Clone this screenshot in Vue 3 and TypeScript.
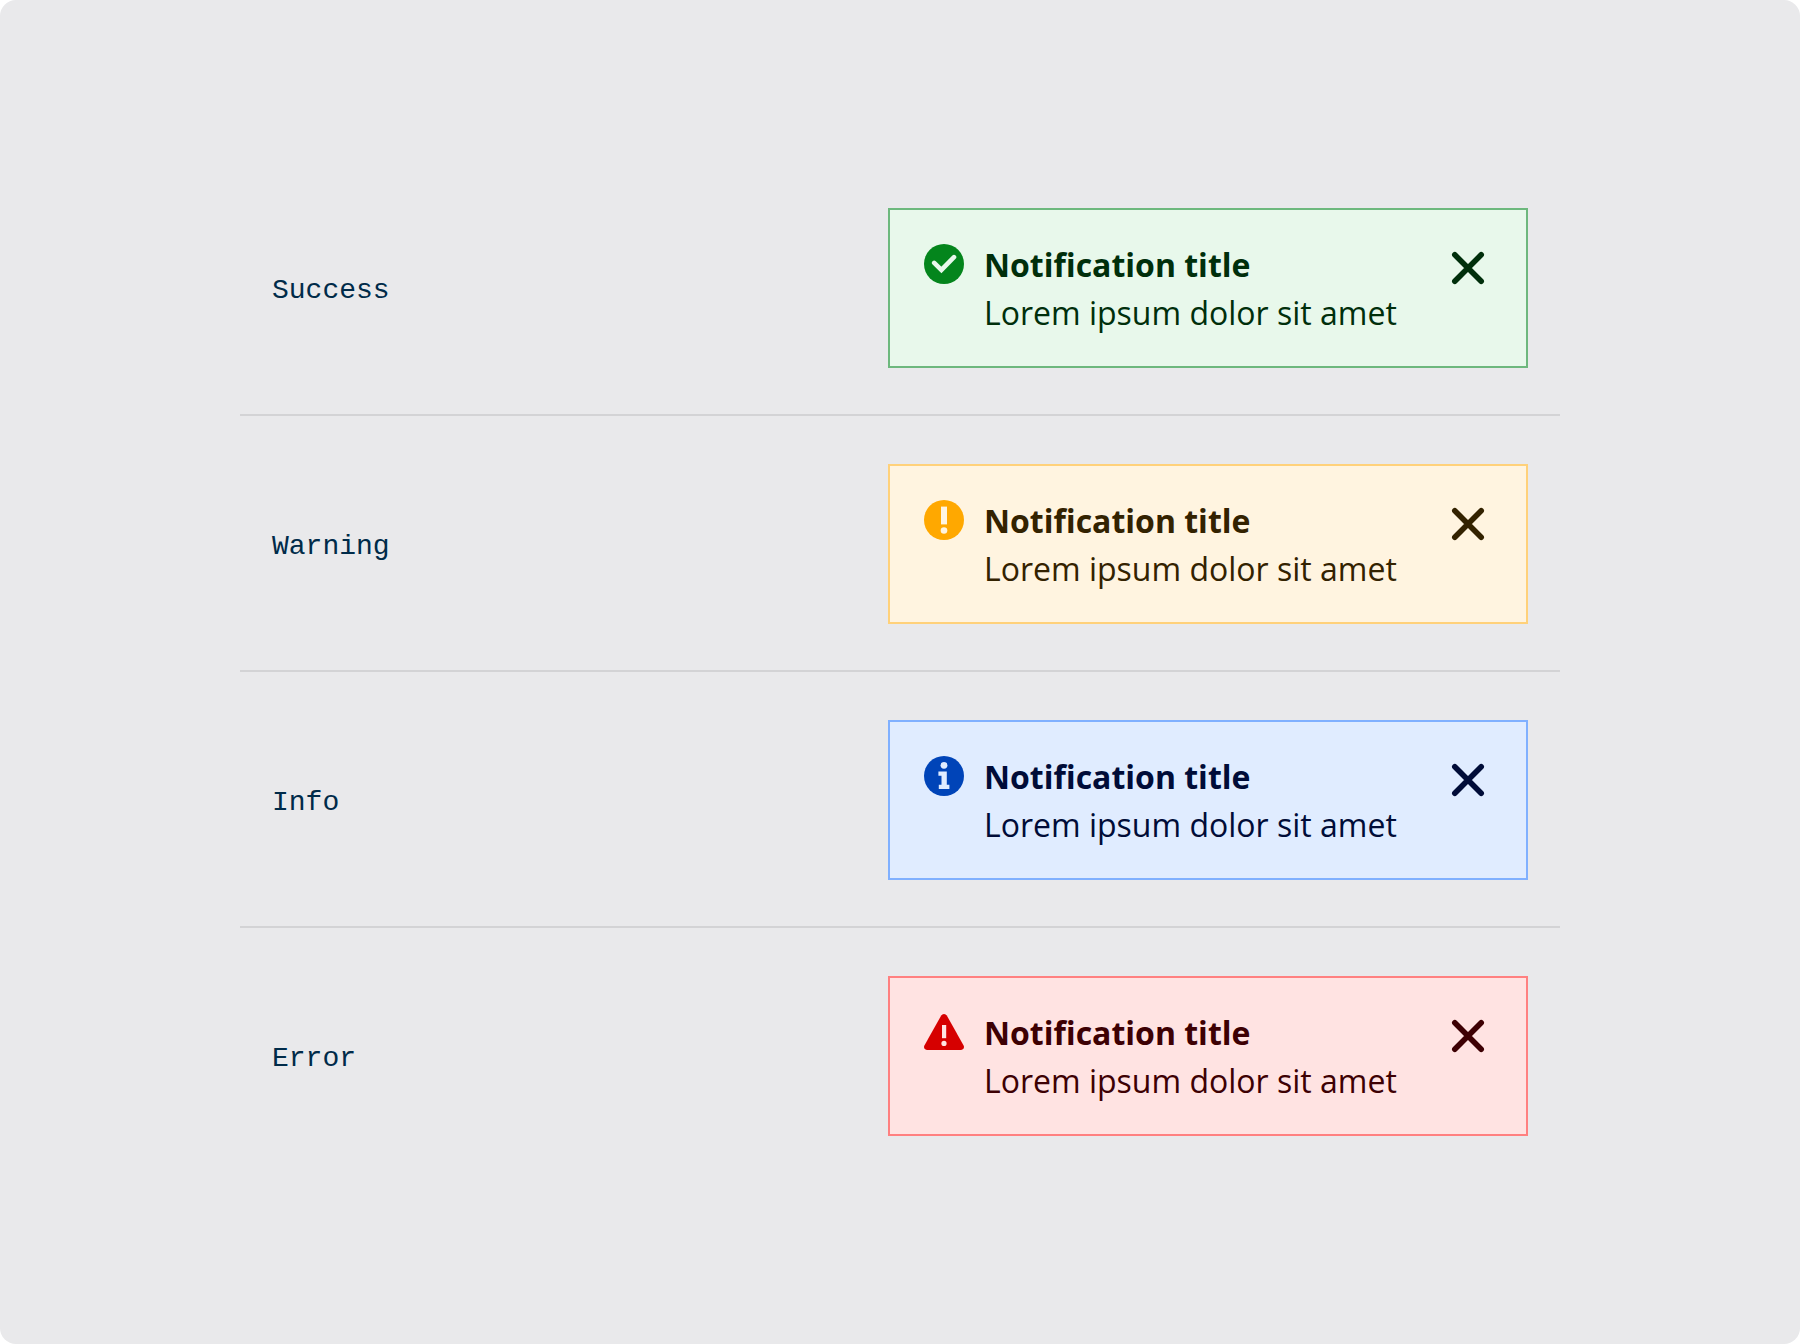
<script setup lang="ts">
import { ref } from 'vue'

type Kind = 'success' | 'warning' | 'info' | 'error'

interface Row {
  kind: Kind
  label: string
  title: string
  text: string
  open: boolean
}

const make = (kind: Kind, label: string): Row => ({
  kind,
  label,
  title: 'Notification title',
  text: 'Lorem ipsum dolor sit amet',
  open: true,
})

const rows = ref<Row[]>([
  make('success', 'Success'),
  make('warning', 'Warning'),
  make('info', 'Info'),
  make('error', 'Error'),
])
</script>

<template>
  <main class="page">
    <ul class="list">
      <li v-for="row in rows" :key="row.kind" class="row">
        <span class="label">{{ row.label }}</span>
        <section v-if="row.open" class="notice" :class="row.kind" role="status">
          <svg class="icon" viewBox="0 0 40 40" aria-hidden="true">
            <template v-if="row.kind === 'success'">
              <circle cx="20" cy="20" r="20" fill="currentColor" />
              <path class="mark-line" d="M10.2 18.9 17.4 25.9 30 13.2" />
            </template>
            <template v-else-if="row.kind === 'warning'">
              <circle cx="20" cy="20" r="20" fill="currentColor" />
              <path class="mark" d="M17 6.6h6v17.8h-6z" />
              <circle class="mark" cx="20" cy="30.5" r="3.3" />
            </template>
            <template v-else-if="row.kind === 'info'">
              <circle cx="20" cy="20" r="20" fill="currentColor" />
              <circle class="mark" cx="20" cy="9.3" r="3.4" />
              <path class="mark" d="M14.4 15.6h8.4v13.2h2.6v4.2H14.8v-4.2h2.7v-9h-3.1z" />
            </template>
            <template v-else>
              <path
                d="M17.2 3.5a3.3 3.3 0 0 1 5.6 0L39.6 33.6a3 3 0 0 1-2.6 4.4H3a3 3 0 0 1-2.6-4.4z"
                fill="currentColor"
              />
              <path class="mark" d="M18 13h4.2v13.2H18z" />
              <circle class="mark" cx="20" cy="31.4" r="2.6" />
            </template>
          </svg>
          <div class="body">
            <h2 class="title">{{ row.title }}</h2>
            <p class="text">{{ row.text }}</p>
          </div>
          <button class="close" type="button" aria-label="Close" @click="row.open = false">
            <svg class="cross" viewBox="0 0 48 48" aria-hidden="true">
              <path d="M10.8 10.8 37.2 37.2M37.2 10.8 10.8 37.2" />
            </svg>
          </button>
        </section>
      </li>
    </ul>
  </main>
</template>

<style>
body {
  margin: 0;
  background: #ffffff;
}
</style>

<style scoped>
.page {
  box-sizing: border-box;
  min-height: 100vh;
  padding: 160px 32px;
  border-radius: 16px;
  background: #e9e9eb;
}

.list {
  max-width: 1320px;
  margin: 0 auto;
  padding: 0;
  list-style: none;
}

.row {
  box-sizing: border-box;
  display: grid;
  grid-template-columns: minmax(0, 1fr) minmax(0, 640px);
  align-items: center;
  min-height: 256px;
  padding: 48px 32px 46px;
  border-bottom: 2px solid #d3d3d5;
}

.row:last-child {
  border-bottom-color: transparent;
}

.label {
  padding-top: 6px;
  color: #002b49;
  font: 28px/40px 'Liberation Mono', 'Courier New', monospace;
}

.notice {
  box-sizing: border-box;
  display: flex;
  align-items: flex-start;
  gap: 20px;
  min-height: 160px;
  padding: 31px 34px 29px;
  border: 2px solid var(--line);
  background: var(--fill);
  color: var(--text);
  font-family: 'Open Sans', 'Noto Sans', sans-serif;
}

.success {
  --fill: #e8f8eb;
  --line: #6db87d;
  --accent: #04851c;
  --text: #002f0b;
}

.warning {
  --fill: #fff4e0;
  --line: #ffd17a;
  --accent: #ffa800;
  --text: #332200;
}

.info {
  --fill: #e0ecff;
  --line: #80b0ff;
  --accent: #0044b8;
  --text: #000c38;
}

.error {
  --fill: #ffe3e2;
  --line: #ff8080;
  --accent: #d60000;
  --text: #3d0003;
}

.icon {
  flex: none;
  width: 40px;
  height: 40px;
  margin-top: 3px;
  color: var(--accent);
}

.mark {
  fill: var(--fill);
}

.mark-line {
  fill: none;
  stroke: var(--fill);
  stroke-width: 4.6;
  stroke-linecap: round;
}

.body {
  flex: 1;
  min-width: 0;
}

.title,
.text {
  margin: 0;
  font-size: 32px;
  line-height: 48px;
}

.title {
  font-weight: 700;
}

.text {
  font-weight: 400;
}

.close {
  flex: none;
  width: 48px;
  height: 48px;
  margin-top: 3px;
  padding: 0;
  border: 0;
  background: none;
  color: inherit;
  cursor: pointer;
}

.cross {
  display: block;
  width: 48px;
  height: 48px;
  fill: none;
  stroke: currentColor;
  stroke-width: 5.6;
  stroke-linecap: round;
}
</style>
